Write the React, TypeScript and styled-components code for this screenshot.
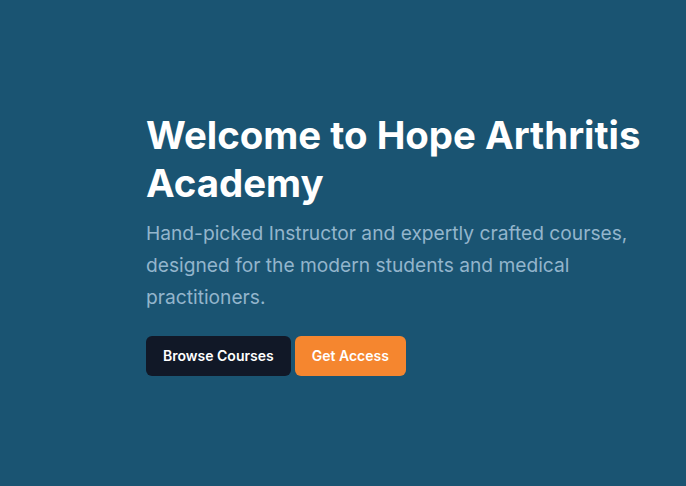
import React from "react";
import styled, { createGlobalStyle } from "styled-components";

const Global = createGlobalStyle`
  html, body { margin: 0; padding: 0; }
  body { background: #1a5472; font-family: Inter, "Noto Sans", sans-serif; }
`;

const Page = styled.main`
  box-sizing: border-box;
  width: 100%;
  height: 486px;
  background: #1a5472;
  display: flex;
  flex-direction: column;
  justify-content: center;
  padding: 0 20px 0 146px;
`;

const Title = styled.h1`
  margin: 0;
  font-size: 38.4px;
  line-height: 48px;
  font-weight: 700;
  color: #ffffff;
`;

const Lead = styled.p`
  margin: 10px 0 0;
  font-size: 19.2px;
  line-height: 32px;
  color: #93b5cc;
  max-width: 500px;
`;

const Actions = styled.div`
  display: flex;
  gap: 4px;
  margin-top: 23px;
`;

const Button = styled.button<{ $variant: "dark" | "orange" }>`
  height: 40px;
  padding: 0 17px;
  border: none;
  border-radius: 6px;
  font-family: Inter, sans-serif;
  font-size: 14px;
  font-weight: 600;
  color: #ffffff;
  background: ${(p) => (p.$variant === "dark" ? "#111827" : "#f5862f")};
  cursor: pointer;
`;

export default function App() {
  return (
    <>
      <Global />
      <Page>
        <Title>
          Welcome to Hope Arthritis
          <br />
          Academy
        </Title>
        <Lead>
          Hand-picked Instructor and expertly crafted courses, designed for the
          modern students and medical practitioners.
        </Lead>
        <Actions>
          <Button $variant="dark">Browse Courses</Button>
          <Button $variant="orange">Get Access</Button>
        </Actions>
      </Page>
    </>
  );
}
